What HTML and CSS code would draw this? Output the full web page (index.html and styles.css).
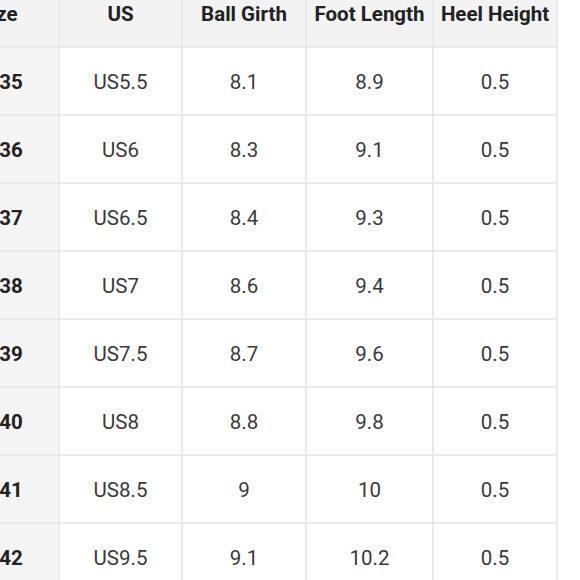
FILE: index.html
```html
<!DOCTYPE html>
<html>
<head>
<meta charset="utf-8">
<link rel="stylesheet" href="styles.css">
</head>
<body>
<div class="chart">
  <div class="cell head first"><span class="size-label">Size</span></div>
  <div class="cell head">US</div>
  <div class="cell head">Ball Girth</div>
  <div class="cell head">Foot Length</div>
  <div class="cell head">Heel Height</div>

  <div class="cell first">35</div><div class="cell">US5.5</div><div class="cell">8.1</div><div class="cell">8.9</div><div class="cell">0.5</div>
  <div class="cell first">36</div><div class="cell">US6</div><div class="cell">8.3</div><div class="cell">9.1</div><div class="cell">0.5</div>
  <div class="cell first">37</div><div class="cell">US6.5</div><div class="cell">8.4</div><div class="cell">9.3</div><div class="cell">0.5</div>
  <div class="cell first">38</div><div class="cell">US7</div><div class="cell">8.6</div><div class="cell">9.4</div><div class="cell">0.5</div>
  <div class="cell first">39</div><div class="cell">US7.5</div><div class="cell">8.7</div><div class="cell">9.6</div><div class="cell">0.5</div>
  <div class="cell first">40</div><div class="cell">US8</div><div class="cell">8.8</div><div class="cell">9.8</div><div class="cell">0.5</div>
  <div class="cell first">41</div><div class="cell">US8.5</div><div class="cell">9</div><div class="cell">10</div><div class="cell">0.5</div>
  <div class="cell first">42</div><div class="cell">US9.5</div><div class="cell">9.1</div><div class="cell">10.2</div><div class="cell">0.5</div>
</div>
</body>
</html>
```

FILE: styles.css
```css
html, body {
  margin: 0;
  padding: 0;
  background: #ffffff;
  overflow: hidden;
}

.chart {
  display: grid;
  grid-template-columns: 94px 121px 122px 125px 122px;
  grid-template-rows: 67px repeat(8, 66px);
  gap: 2px;
  padding: 0 2px 2px 0;
  width: max-content;
  background: #eaeaea;
  margin-left: -36px;
  margin-top: -21px;
  font-family: Roboto, "Liberation Sans", Arial, sans-serif;
}

.cell {
  display: flex;
  align-items: center;
  justify-content: center;
  background: #ffffff;
  color: #3a3a3a;
  font-size: 20.5px;
  padding-top: 1px;
}

.head {
  background: #f3f3f3;
  color: #222222;
  font-weight: 700;
  padding-top: 3px;
}

.first {
  background: #f5f5f5;
  color: #222222;
  font-weight: 700;
}

.head.first {
  background: #f3f3f3;
}

.size-label {
  margin-right: 26px;
}
```
